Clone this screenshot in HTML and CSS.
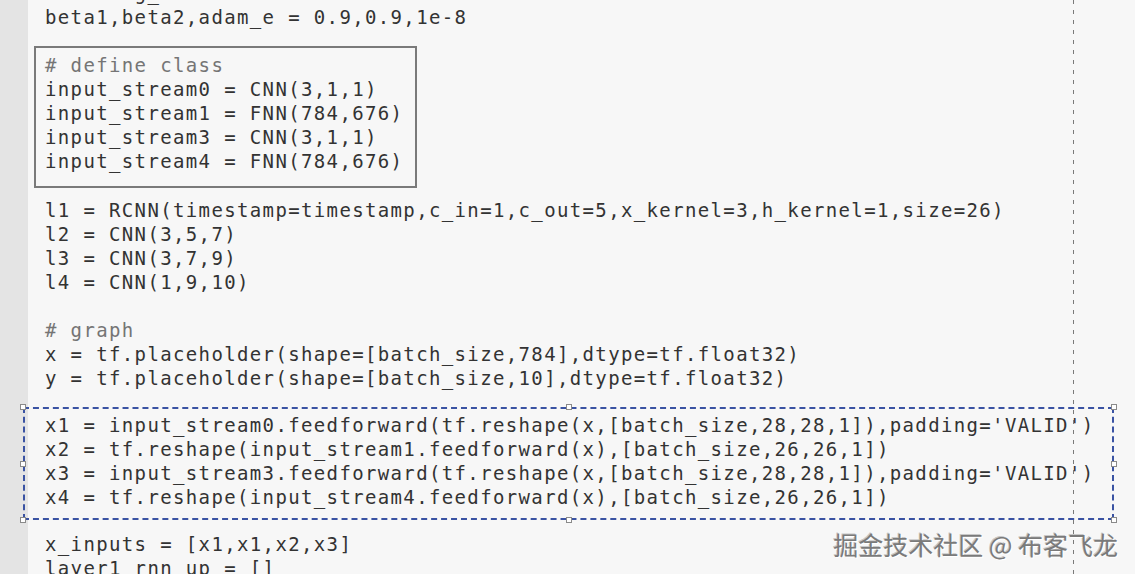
FILE: index.html
```html
<!DOCTYPE html>
<html lang="zh">
<head>
<meta charset="utf-8">
<title>code</title>
<link rel="stylesheet" href="styles.css">
</head>
<body>
<div class="page">
  <div class="gutter"></div>
  <div class="doc">
<pre class="code">learning_rate = 0.001
beta1,beta2,adam_e = 0.9,0.9,1e-8</pre>
<div class="box-solid"><pre class="code"><span class="cm"># define class</span>
input_stream0 = CNN(3,1,1)
input_stream1 = FNN(784,676)
input_stream3 = CNN(3,1,1)
input_stream4 = FNN(784,676)</pre></div>
<pre class="code gap-a">l1 = RCNN(timestamp=timestamp,c_in=1,c_out=5,x_kernel=3,h_kernel=1,size=26)
l2 = CNN(3,5,7)
l3 = CNN(3,7,9)
l4 = CNN(1,9,10)

<span class="cm"># graph</span>
x = tf.placeholder(shape=[batch_size,784],dtype=tf.float32)
y = tf.placeholder(shape=[batch_size,10],dtype=tf.float32)</pre>
<div class="box-sel"><pre class="code">x1 = input_stream0.feedforward(tf.reshape(x,[batch_size,28,28,1]),padding='VALID')
x2 = tf.reshape(input_stream1.feedforward(x),[batch_size,26,26,1])
x3 = input_stream3.feedforward(tf.reshape(x,[batch_size,28,28,1]),padding='VALID')
x4 = tf.reshape(input_stream4.feedforward(x),[batch_size,26,26,1])</pre>
  <span class="h h-tl"></span><span class="h h-tm"></span><span class="h h-tr"></span>
  <span class="h h-ml"></span><span class="h h-mr"></span>
  <span class="h h-bl"></span><span class="h h-bm"></span><span class="h h-br"></span>
</div>
<pre class="code gap-c">x_inputs = [x1,x1,x2,x3]
layer1_rnn_up = []</pre>
  </div>
  <div class="guide"></div>
  <div class="watermark">掘金技术社区 @ 布客飞龙</div>
</div>
</body>
</html>
```
FILE: styles.css
```css
html, body {
  margin: 0;
  padding: 0;
  height: 100%;
  overflow: hidden;
}
body {
  background: #f7f7f7;
}
.page {
  position: relative;
  display: flex;
  height: 574px;
  width: 1135px;
  overflow: hidden;
  background: #f7f7f7;
}
.gutter {
  flex: 0 0 28px;
  background: #e4e4e4;
}
.doc {
  flex: 1;
  padding-left: 17px;
  margin-top: -19px;
}
.code {
  margin: 0;
  font-family: "DejaVu Sans Mono", "Liberation Mono", monospace;
  font-size: 19px;
  letter-spacing: 1.36px;
  line-height: 24px;
  color: #333333;
  white-space: pre;
}
.cm {
  color: #757575;
}
.box-solid {
  margin: 17px 0 0 -11px;
  width: 383px;
  box-sizing: border-box;
  border: 2px solid #7a7a7a;
  padding: 5px 9px 13px 9px;
}
.gap-a {
  margin-top: 10px;
}
.box-sel {
  position: relative;
  margin: 17px 0 0 -22px;
  width: 1091px;
  box-sizing: border-box;
  border: 2px dashed #3a53a3;
  padding: 4px 0 9px 20px;
}
.gap-c {
  margin-top: 12px;
}
.h {
  position: absolute;
  width: 4px;
  height: 4px;
  background: #fff;
  border: 1px solid #8a8a8a;
}
.h-tl { left: -5px; top: -5px; }
.h-tm { left: 541px; top: -5px; }
.h-tr { right: -5px; top: -5px; }
.h-ml { left: -5px; top: 52px; }
.h-mr { right: -5px; top: 52px; }
.h-bl { left: -5px; bottom: -5px; }
.h-bm { left: 541px; bottom: -5px; }
.h-br { right: -5px; bottom: -5px; }
.guide {
  position: absolute;
  left: 1073px;
  top: 0;
  width: 1px;
  height: 574px;
  background: repeating-linear-gradient(to bottom, #7a7a7a 0 4px, transparent 4px 10px);
}
.watermark {
  position: absolute;
  right: 17px;
  top: 527px;
  font-family: "Noto Sans CJK SC", "Noto Sans", sans-serif;
  font-size: 25px;
  line-height: 34px;
  color: #7a7a7a;
  text-shadow: 1px 1px 0 #ffffff, -1px -1px 0 rgba(80,80,80,0.3);
  white-space: nowrap;
}
```
